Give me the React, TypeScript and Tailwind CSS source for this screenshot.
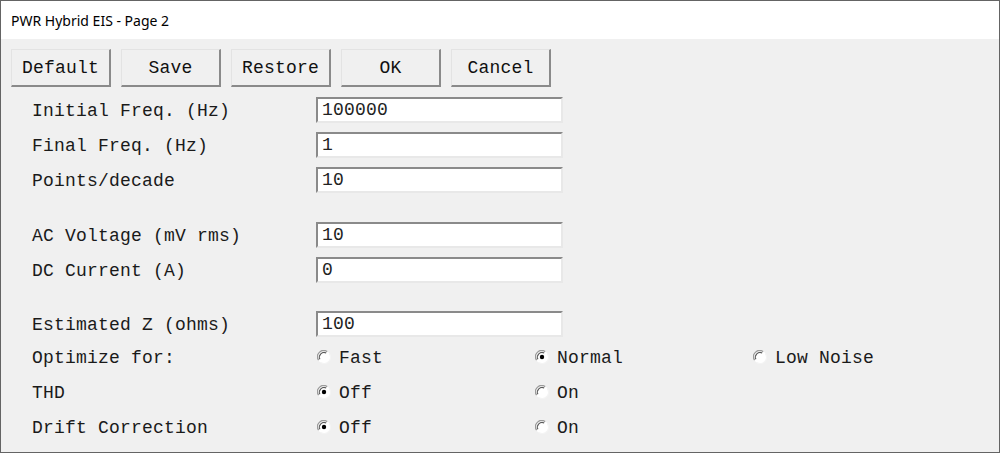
import React from "react";

const mono = { fontFamily: '"Liberation Mono", "Courier New", monospace' };

function Btn({ label }: { label: string }) {
  return (
    <div className="w-[100px] h-[38px] flex items-center justify-center bg-[#f0f0f0] border-t border-l border-t-[#e3e3e3] border-l-[#e3e3e3] border-r-2 border-b-2 border-r-[#8a8a8a] border-b-[#8a8a8a] text-[18px] tracking-[0.2px] text-[#111] pt-[2px]">
      {label}
    </div>
  );
}

function Input({ value }: { value: string }) {
  return (
    <div className="w-[247px] h-[26px] bg-white border-2 border-t-[#8a8a8a] border-l-[#8a8a8a] border-r-[#e8e8e8] border-b-[#e8e8e8] flex items-center pl-[4px] pt-[1px] text-[18px] tracking-[0.2px] text-[#222]">
      {value}
    </div>
  );
}

function Radio({ checked, label }: { checked?: boolean; label: string }) {
  return (
    <div className="flex items-center gap-[8px]">
      <svg width="14" height="14" viewBox="0 0 14 14" className="mt-[-2px]">
        <circle cx="7" cy="7" r="6.5" fill="#fff" />
        <path d="M1.6 10.2 A6.2 6.2 0 0 1 10.2 1.6" fill="none" stroke="#9a9a9a" strokeWidth="1.3" />
        <path d="M2.9 9.2 A4.7 4.7 0 0 1 9.2 2.9" fill="none" stroke="#5a5a5a" strokeWidth="1.1" />
        <path d="M12.4 3.8 A6.2 6.2 0 0 1 3.8 12.4" fill="none" stroke="#f4f4f4" strokeWidth="1.2" />
        {checked && <circle cx="7" cy="7" r="2.2" fill="#000" />}
      </svg>
      <span>{label}</span>
    </div>
  );
}

function Row({ label, children, h = "h-[35px]" }: { label: string; children: React.ReactNode; h?: string }) {
  return (
    <div className={`flex items-center ${h}`}>
      <div className="w-[284px] pt-[3px]">{label}</div>
      {children}
    </div>
  );
}

function RadioRow({ label, items }: { label: string; items: { l: string; c?: boolean }[] }) {
  return (
    <div className="flex items-center h-[35px] pt-[3px]">
      <div className="w-[285px]">{label}</div>
      {items.map((it, i) => (
        <div key={i} className="w-[218px]">
          <Radio label={it.l} checked={it.c} />
        </div>
      ))}
    </div>
  );
}

export default function App() {
  return (
    <div className="w-[1000px] h-[453px] border border-[#646464] bg-[#f0f0f0] flex flex-col overflow-hidden">
      <div
        className="h-[38px] bg-white flex items-center pl-[10px] pt-[1px] text-[14px] text-black"
        style={{ fontFamily: '"Noto Sans", "Open Sans", sans-serif' }}
      >
        PWR Hybrid EIS - Page 2
      </div>
      <div className="flex flex-col pt-[10px]" style={mono}>
        <div className="flex gap-[10px] pl-[10px]">
          <Btn label="Default" />
          <Btn label="Save" />
          <Btn label="Restore" />
          <Btn label="OK" />
          <Btn label="Cancel" />
        </div>
        <div className="flex flex-col mt-[5px] pl-[31px] text-[18px] tracking-[0.2px] text-[#1a1a1a]">
          <Row label="Initial Freq. (Hz)"><Input value="100000" /></Row>
          <Row label="Final Freq. (Hz)"><Input value="1" /></Row>
          <Row label="Points/decade"><Input value="10" /></Row>
          <div className="h-[20px]" />
          <Row label="AC Voltage (mV rms)"><Input value="10" /></Row>
          <Row label="DC Current (A)"><Input value="0" /></Row>
          <div className="h-[22px]" />
          <Row label="Estimated Z (ohms)" h="h-[30px]"><Input value="100" /></Row>
          <RadioRow label="Optimize for:" items={[{ l: "Fast" }, { l: "Normal", c: true }, { l: "Low Noise" }]} />
          <RadioRow label="THD" items={[{ l: "Off", c: true }, { l: "On" }]} />
          <RadioRow label="Drift Correction" items={[{ l: "Off", c: true }, { l: "On" }]} />
        </div>
      </div>
    </div>
  );
}
